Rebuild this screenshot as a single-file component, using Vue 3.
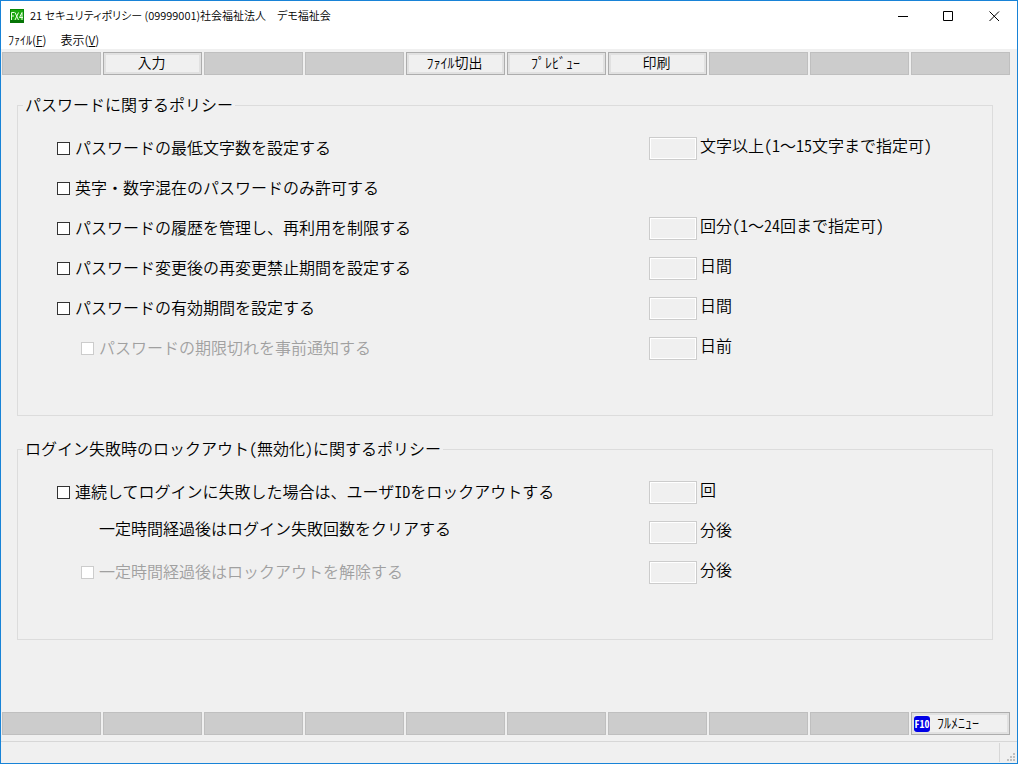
<template>
  <div class="window">
    <header class="title-bar">
      <svg class="app-icon" width="14" height="14" viewBox="0 0 14 14" aria-hidden="true">
        <rect width="14" height="14" fill="#078a07" />
        <rect x="1" y="1" width="12" height="12" fill="#1ba80f" />
        <rect x="0" y="11" width="14" height="3" fill="#067506" />
        <path d="M1.5 11V3.5H4.5M1.5 7H4M5 3.5L8.5 11M8.5 3.5L5 11M12 11V3.5L9.5 8.5H13" fill="none" stroke="#e9ffe4" stroke-width="1" />
      </svg>
      <h1 class="title">21 セキュリティポリシー (09999001)社会福祉法人　デモ福祉会</h1>
      <div class="window-controls">
        <button type="button" class="control" aria-label="最小化">
          <svg width="11" height="11" viewBox="0 0 11 11"><path d="M1 5.5H11" /></svg>
        </button>
        <button type="button" class="control" aria-label="最大化">
          <svg width="11" height="11" viewBox="0 0 11 11"><path d="M.5 .5H9.5V9.5H.5Z" /></svg>
        </button>
        <button type="button" class="control" aria-label="閉じる">
          <svg width="11" height="11" viewBox="0 0 11 11"><path d="M.5 .5L10 10M10 .5L.5 10" /></svg>
        </button>
      </div>
    </header>

    <nav class="menu-bar">
      <button type="button" class="menu-item">ﾌｧｲﾙ(<u>F</u>)</button>
      <button type="button" class="menu-item">表示(<u>V</u>)</button>
    </nav>

    <div class="function-bar function-bar-top">
      <button v-for="(label, index) in topButtons" :key="index" type="button" class="function-button" :disabled="!label">
        {{ label }}
      </button>
    </div>

    <main class="content">
      <fieldset v-for="group in groups" :key="group.title" class="policy-group">
        <legend>{{ group.title }}</legend>
        <div v-for="row in group.rows" :key="row.id" class="policy-row">
          <div class="policy-name" :class="{ sub: row.sub, plain: row.plain }">
            <label v-if="row.plain" :for="row.id + '-value'">{{ row.label }}</label>
            <template v-else>
              <input :id="row.id" v-model="row.checked" type="checkbox" :disabled="row.sub" />
              <label :for="row.id">{{ row.label }}</label>
            </template>
          </div>
          <div v-if="row.unit" class="policy-value">
            <input :id="row.id + '-value'" v-model="row.value" type="text" :disabled="!row.checked" :aria-label="row.label" />
            <label :for="row.id + '-value'">{{ row.unit }}<template v-if="row.range">({{ row.range[0] }}<span class="wave">〜</span>{{ row.range[1] }}まで指定可)</template></label>
          </div>
        </div>
      </fieldset>
    </main>

    <div class="function-bar function-bar-bottom">
      <button v-for="n in 9" :key="n" type="button" class="function-button" disabled></button>
      <button type="button" class="function-button full-menu">
        <span class="key-badge">F10</span>
        <span>ﾌﾙﾒﾆｭｰ</span>
      </button>
    </div>

    <footer class="status-bar">
      <div class="status-grip">
        <svg width="9" height="9" viewBox="0 0 9 9" fill="#bfbfbf" aria-hidden="true">
          <path d="M6 0h2v2h-2zM3 3h2v2h-2zM6 3h2v2h-2zM0 6h2v2h-2zM3 6h2v2h-2zM6 6h2v2h-2z" />
        </svg>
      </div>
    </footer>
  </div>
</template>

<script setup>
import { reactive } from 'vue';

const topButtons = ['', '入力', '', '', 'ﾌｧｲﾙ切出', 'ﾌﾟﾚﾋﾞｭｰ', '印刷', '', '', ''];

const groups = reactive([
  {
    title: 'パスワードに関するポリシー',
    rows: [
      { id: 'min-length', label: 'パスワードの最低文字数を設定する', unit: '文字以上', range: ['1', '15文字'], checked: false, value: '' },
      { id: 'mixed', label: '英字・数字混在のパスワードのみ許可する', checked: false },
      { id: 'history', label: 'パスワードの履歴を管理し、再利用を制限する', unit: '回分', range: ['1', '24回'], checked: false, value: '' },
      { id: 'min-age', label: 'パスワード変更後の再変更禁止期間を設定する', unit: '日間', checked: false, value: '' },
      { id: 'max-age', label: 'パスワードの有効期間を設定する', unit: '日間', checked: false, value: '' },
      { id: 'notice', label: 'パスワードの期限切れを事前通知する', unit: '日前', sub: true, checked: false, value: '' },
    ],
  },
  {
    title: 'ログイン失敗時のロックアウト(無効化)に関するポリシー',
    rows: [
      { id: 'lockout', label: '連続してログインに失敗した場合は、ユーザIDをロックアウトする', unit: '回', checked: false, value: '' },
      { id: 'clear', label: '一定時間経過後はログイン失敗回数をクリアする', unit: '分後', plain: true, checked: false, value: '' },
      { id: 'unlock', label: '一定時間経過後はロックアウトを解除する', unit: '分後', sub: true, checked: false, value: '' },
    ],
  },
]);
</script>

<style>
body {
  margin: 0;
  background: #f0f0f0;
}
</style>

<style scoped>
.window {
  box-sizing: border-box;
  display: flex;
  flex-direction: column;
  min-height: 100vh;
  border: 1px solid #1883d7;
  background: #f0f0f0;
  color: #000;
  font-family: "Noto Sans CJK JP", sans-serif;
  font-size: 16px;
  font-weight: 350;
  line-height: 16px;
}

button,
input {
  font: inherit;
  color: inherit;
}

.title-bar {
  display: flex;
  align-items: center;
  height: 30px;
  padding-left: 9px;
  background: #fff;
}

.app-icon {
  flex: none;
}

.title {
  flex: 1;
  margin: 0 0 0 6px;
  padding-bottom: 2px;
  font-size: 11px;
  font-weight: inherit;
  font-feature-settings: "palt";
  white-space: nowrap;
}

.window-controls {
  display: flex;
}

.control {
  display: flex;
  align-items: center;
  justify-content: center;
  width: 46px;
  height: 30px;
  padding: 0;
  border: 0;
  background: transparent;
}

.control path {
  fill: none;
  stroke: #000;
}

.menu-bar {
  display: flex;
  gap: 14px;
  height: 18px;
  padding-left: 7px;
  background: #fff;
}

.menu-item {
  padding: 0;
  border: 0;
  background: transparent;
  font-size: 12px;
}

.function-bar {
  display: grid;
  grid-template-columns: repeat(10, minmax(0, 1fr));
  gap: 2px;
  padding: 0 7px 0 1px;
}

.function-bar-top {
  padding-top: 3px;
}

.function-bar-bottom {
  padding-bottom: 6px;
}

.function-button {
  height: 23px;
  padding: 0 2px 3px 0;
  border: 1px solid #adadad;
  background: #f0f0f0;
  box-shadow: inset 0 0 0 2px #e1e1e1;
  font-size: 14px;
  white-space: nowrap;
}

.function-button:disabled {
  border-color: #bfbfbf;
  background: #ccc;
  box-shadow: none;
}

.full-menu {
  display: flex;
  align-items: center;
  gap: 7px;
  padding: 0 0 0 2px;
}

.full-menu span {
  padding-bottom: 4px;
}

.full-menu .key-badge {
  width: 16px;
  padding: 0;
  border-radius: 3px;
  background: #0000e6;
  color: #fff;
  font-size: 10px;
  font-weight: bold;
  font-feature-settings: "hwid";
  text-align: center;
}

.content {
  flex: 1;
  display: flex;
  flex-direction: column;
  gap: 24px;
  padding: 21px 24px 24px 16px;
  font-feature-settings: "hwid";
}

.wave {
  font-feature-settings: normal;
}

.policy-group {
  min-width: 0;
  margin: 0;
  padding: 14px 0 47px;
  border: 1px solid #dcdcdc;
}

.policy-group legend {
  margin-left: 5px;
  padding: 0 2px 2px;
}

.policy-row {
  display: grid;
  grid-template-columns: minmax(0, 1fr) 343px;
  align-items: center;
  height: 40px;
}

.policy-name {
  display: flex;
  align-items: center;
  gap: 5px;
  padding-left: 39px;
  white-space: nowrap;
}

.policy-name.sub {
  padding-left: 63px;
  color: #a0a0a0;
}

.policy-name.plain {
  padding: 0 0 6px 81px;
}

.policy-name label {
  padding-bottom: 2px;
}

.policy-name input {
  appearance: none;
  box-sizing: border-box;
  width: 13px;
  height: 13px;
  margin: 0;
  border: 1px solid #333;
  background: #fff;
}

.policy-name input:checked {
  background: #333;
  box-shadow: inset 0 0 0 2px #fff;
}

.policy-name input:disabled {
  border-color: #ccc;
}

.policy-value {
  display: flex;
  align-items: center;
  gap: 3px;
  white-space: nowrap;
}

.policy-value input {
  box-sizing: border-box;
  width: 48px;
  height: 23px;
  padding: 0 4px;
  border: 1px solid #7a7a7a;
  background: #fff;
}

.policy-value input:disabled {
  border-color: #ccc;
  background: #f0f0f0;
  box-shadow: inset 0 0 0 1px #fff;
}

.policy-value label {
  padding-bottom: 6px;
}

.status-bar {
  display: flex;
  justify-content: flex-end;
  height: 21px;
  border-top: 1px solid #d7d7d7;
}

.status-grip {
  display: flex;
  align-items: flex-end;
  justify-content: flex-end;
  width: 16px;
  margin: 1px 0;
  padding-right: 1px;
  border-left: 1px solid #d7d7d7;
}
</style>
